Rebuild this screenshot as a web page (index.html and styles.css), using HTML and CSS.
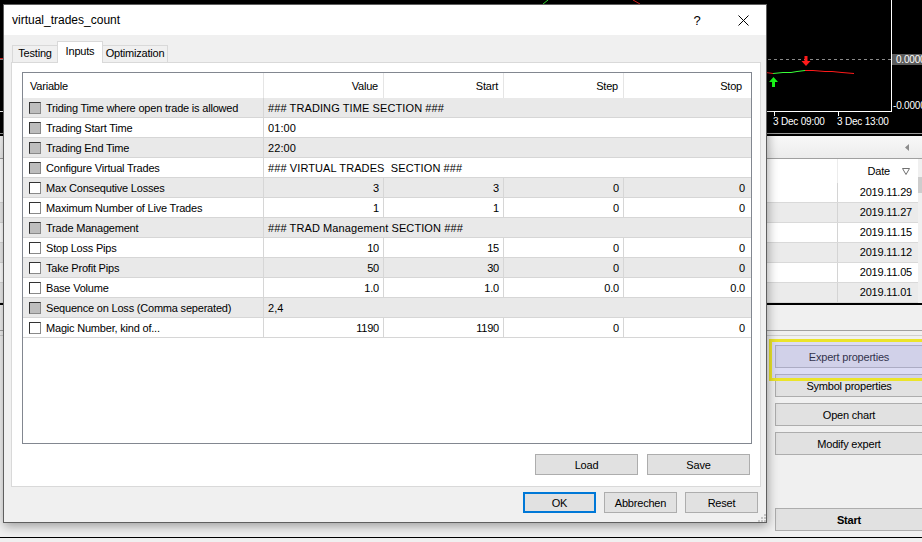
FILE: index.html
```html
<!DOCTYPE html>
<html lang="en">
<head>
    <meta charset="UTF-8">
    <title>virtual_trades_count</title>
    <link rel="stylesheet" href="styles.css">
</head>
<body>
    <!-- Terminal behind the dialog -->
    <div class="terminal">
        <div class="chart">
            <svg class="chart-canvas" width="922" height="133" viewBox="0 0 922 133">
                <line x1="543" y1="4" x2="548" y2="0" stroke="#2fe02f"/>
                <line x1="633" y1="0" x2="640" y2="4" stroke="#e02020"/>
                <line x1="0" y1="58.5" x2="3" y2="58.5" stroke="#e02020"/>
                <line x1="0" y1="59.5" x2="891" y2="59.5" stroke="#8a8a8a" stroke-dasharray="3 3"/>
                <line x1="891.5" y1="0" x2="891.5" y2="112" stroke="#fff"/>
                <line x1="0" y1="111.5" x2="891" y2="111.5" stroke="#fff"/>
                <line x1="774.5" y1="111" x2="774.5" y2="116" stroke="#fff"/>
                <line x1="838.5" y1="111" x2="838.5" y2="116" stroke="#fff"/>
                <polyline points="766,72.5 773,73.5" fill="none" stroke="#ff1a1a"/>
                <polyline points="773,73.5 783,72.5 791,72.5 797,71.5 805,70.5" fill="none" stroke="#39ff39"/>
                <polyline points="805,70.5 813,70.5 825,71.5 832,71.5 842,72.5 854,73.5" fill="none" stroke="#ff1a1a"/>
                <path d="M804.5 56h3v5h3l-4.5 5-4.5-5h3z" fill="#ff1a1a"/>
                <path d="M772 87v-5h-3l4.5-5 4.5 5h-3v5z" fill="#1aff1a"/>
                <rect x="892" y="54" width="30" height="11" fill="#5c5c5c"/>
                <text class="axis-label" x="896" y="63">0.0000</text>
                <text class="axis-label" x="893" y="109">-0.0000</text>
                <text class="axis-label" x="773" y="125">3 Dec 09:00</text>
                <text class="axis-label" x="837" y="125">3 Dec 13:00</text>
            </svg>
        </div>

        <div class="toolbar">
            <svg width="4" height="7" viewBox="0 0 4 7"><polygon points="4,0 4,7 0,3.5" fill="#8c8c8c"/></svg>
        </div>

        <div class="results">
            <div class="results-list">
                <div class="results-head">
                    <div class="cell"></div>
                    <div class="cell date">
                        <span>Date</span>
                        <svg width="8" height="7" viewBox="0 0 8 7"><polygon points="0.5,0.5 7.5,0.5 4,6.5" fill="none" stroke="#707070"/></svg>
                    </div>
                </div>
                <div class="results-row"><div class="cell"></div><div class="cell date">2019.11.29</div></div>
                <div class="results-row"><div class="cell"></div><div class="cell date">2019.11.27</div></div>
                <div class="results-row"><div class="cell"></div><div class="cell date">2019.11.15</div></div>
                <div class="results-row"><div class="cell"></div><div class="cell date">2019.11.12</div></div>
                <div class="results-row"><div class="cell"></div><div class="cell date">2019.11.05</div></div>
                <div class="results-row"><div class="cell"></div><div class="cell date">2019.11.01</div></div>
            </div>
            <div class="vscroll"><div class="thumb"></div></div>
        </div>

        <div class="strip"></div>

        <div class="side-panel">
            <div class="side-buttons">
                <button class="btn side">Expert properties</button>
                <button class="btn side">Symbol properties</button>
                <button class="btn side">Open chart</button>
                <button class="btn side">Modify expert</button>
                <button class="btn side start">Start</button>
            </div>
        </div>

        <div class="highlight"></div>
    </div>

    <!-- Expert properties dialog -->
    <div class="dialog">
        <div class="title-bar">
            <span class="title">virtual_trades_count</span>
            <span class="caption-btn help">?</span>
            <span class="caption-btn">
                <svg width="11" height="11" viewBox="0 0 11 11"><path d="M0.5 0.5l10 10M10.5 0.5l-10 10" stroke="#000" stroke-width="1"/></svg>
            </span>
        </div>

        <div class="dialog-body">
            <div class="tabs">
                <div class="tab">Testing</div>
                <div class="tab active">Inputs</div>
                <div class="tab">Optimization</div>
            </div>

            <div class="tab-page">
                <div class="list-view">
                    <table class="inputs">
                        <colgroup>
                            <col class="col-var">
                            <col class="col-num">
                            <col class="col-num">
                            <col class="col-num">
                            <col class="col-last">
                        </colgroup>
                        <thead>
                            <tr>
                                <th class="var">Variable</th>
                                <th>Value</th>
                                <th>Start</th>
                                <th>Step</th>
                                <th class="last">Stop</th>
                            </tr>
                        </thead>
                        <tbody>
                            <tr>
                                <td class="var"><span class="check off"></span>Triding Time where open trade is allowed</td>
                                <td class="text" colspan="4">### TRADING TIME SECTION ###</td>
                            </tr>
                            <tr>
                                <td class="var"><span class="check off"></span>Trading Start Time</td>
                                <td class="text" colspan="4">01:00</td>
                            </tr>
                            <tr>
                                <td class="var"><span class="check off"></span>Trading End Time</td>
                                <td class="text" colspan="4">22:00</td>
                            </tr>
                            <tr>
                                <td class="var"><span class="check off"></span>Configure Virtual Trades</td>
                                <td class="text" colspan="4">### VIRTUAL TRADES&nbsp; SECTION ###</td>
                            </tr>
                            <tr>
                                <td class="var"><span class="check"></span>Max Consequtive Losses</td>
                                <td>3</td><td>3</td><td>0</td><td class="last">0</td>
                            </tr>
                            <tr>
                                <td class="var"><span class="check"></span>Maximum Number of Live Trades</td>
                                <td>1</td><td>1</td><td>0</td><td class="last">0</td>
                            </tr>
                            <tr>
                                <td class="var"><span class="check off"></span>Trade Management</td>
                                <td class="text" colspan="4">### TRAD Management SECTION ###</td>
                            </tr>
                            <tr>
                                <td class="var"><span class="check"></span>Stop Loss Pips</td>
                                <td>10</td><td>15</td><td>0</td><td class="last">0</td>
                            </tr>
                            <tr>
                                <td class="var"><span class="check"></span>Take Profit Pips</td>
                                <td>50</td><td>30</td><td>0</td><td class="last">0</td>
                            </tr>
                            <tr>
                                <td class="var"><span class="check"></span>Base Volume</td>
                                <td>1.0</td><td>1.0</td><td>0.0</td><td class="last">0.0</td>
                            </tr>
                            <tr>
                                <td class="var"><span class="check off"></span>Sequence on Loss (Comma seperated)</td>
                                <td class="text" colspan="4">2,4</td>
                            </tr>
                            <tr>
                                <td class="var"><span class="check"></span>Magic Number, kind of...</td>
                                <td>1190</td><td>1190</td><td>0</td><td class="last">0</td>
                            </tr>
                        </tbody>
                    </table>
                </div>

                <div class="page-buttons">
                    <button class="btn wide">Load</button>
                    <button class="btn wide">Save</button>
                </div>
            </div>

            <div class="dialog-buttons">
                <button class="btn default">OK</button>
                <button class="btn">Abbrechen</button>
                <button class="btn">Reset</button>
            </div>

            <svg class="grip" width="9" height="9" viewBox="0 0 9 9">
                <rect x="7" y="1" width="2" height="2" fill="#c4c4c4"/>
                <rect x="4" y="4" width="2" height="2" fill="#c4c4c4"/>
                <rect x="7" y="4" width="2" height="2" fill="#c4c4c4"/>
                <rect x="1" y="7" width="2" height="2" fill="#c4c4c4"/>
                <rect x="4" y="7" width="2" height="2" fill="#c4c4c4"/>
                <rect x="7" y="7" width="2" height="2" fill="#c4c4c4"/>
            </svg>
        </div>
    </div>
</body>
</html>
```

FILE: styles.css
```css
/* Base */
body {
    margin: 0;
    width: 922px;
    height: 542px;
    overflow: hidden;
    position: relative;
    font-family: "Liberation Sans", Arial, sans-serif;
    font-size: 11px;
    letter-spacing: -0.2px;
    color: #000;
    background-color: #f0f0f0;
}

button {
    font-family: inherit;
    font-size: 11px;
    letter-spacing: -0.2px;
    color: #000;
}

/* Terminal in the background */
.terminal {
    display: flex;
    flex-direction: column;
    height: 542px;
}

.chart {
    height: 133px;
    background-color: #000;
    border-bottom: 1px solid #9a9a9a;
}

.chart-canvas {
    display: block;
}

.axis-label {
    font-family: "Liberation Sans", Arial, sans-serif;
    font-size: 10px;
    fill: #fff;
}

.toolbar {
    height: 22px;
    border-top: 2px solid #000;
    border-bottom: 1px solid #a0a0a0;
    background: linear-gradient(#f8f8f8, #ececec);
    display: flex;
    justify-content: flex-end;
    align-items: center;
    padding-right: 13px;
}

.results {
    display: flex;
    height: 144px;
    border-bottom: 2px solid #000;
    background-color: #fff;
}

.results-list {
    flex: 1;
}

.results-head, .results-row {
    display: grid;
    grid-template-columns: 1fr 81px;
}

.results-head {
    height: 24px;
}

.results-row {
    height: 19px;
    border-bottom: 1px solid #d9d9d9;
}

.results-row:nth-child(odd) {
    background-color: #ebebeb;
}

.results-row .cell.date {
    border-left: 1px solid #d4d4d4;
    text-align: right;
    padding-right: 6px;
    line-height: 19px;
}

.results-head .cell.date {
    border-left: 1px solid #ececec;
    display: flex;
    justify-content: flex-end;
    align-items: center;
    gap: 12px;
    padding-right: 8px;
}

.vscroll {
    width: 4px;
    background-color: #f0f0f0;
}

.vscroll .thumb {
    margin-top: 18px;
    height: 16px;
    background-color: #cdcdcd;
}

.strip {
    height: 25px;
    border-bottom: 1px solid #a0a0a0;
}

.side-panel {
    flex: 1;
    margin-top: 4px;
    border-top: 1px solid #cfcfcf;
    border-bottom: 1px solid #000;
    margin-bottom: 4px;
    display: flex;
    justify-content: flex-end;
}

.side-buttons {
    width: 148px;
    margin-right: -1px;
    padding: 9px 0 6px;
    display: flex;
    flex-direction: column;
    gap: 6px;
}

.btn {
    background-color: #e1e1e1;
    border: 1px solid #adadad;
    padding: 0;
    height: 21px;
    width: 73px;
}

.btn.side {
    width: 148px;
    height: 23px;
}

.btn.start {
    margin-top: auto;
    font-weight: bold;
}

/* Yellow marker drawn over the terminal */
.highlight {
    position: absolute;
    left: 769px;
    top: 339px;
    width: 170px;
    height: 36px;
    border: 3px solid #ebe42a;
    background-color: rgba(170, 170, 255, 0.28);
}

/* Dialog window */
.dialog {
    position: absolute;
    left: 3px;
    top: 4px;
    width: 764px;
    height: 519px;
    box-sizing: border-box;
    border: 1px solid #5f5f5f;
    background-color: #f0f0f0;
    box-shadow: 1px 3px 10px rgba(0, 0, 0, 0.35);
    display: flex;
    flex-direction: column;
}

.title-bar {
    height: 30px;
    background-color: #fff;
    display: flex;
    align-items: center;
    flex-shrink: 0;
}

.title {
    flex: 1;
    padding-left: 8px;
    font-size: 12px;
    letter-spacing: 0;
}

.caption-btn {
    width: 46px;
    height: 30px;
    display: flex;
    align-items: center;
    justify-content: center;
}

.caption-btn.help {
    font-size: 13px;
    letter-spacing: 0;
}

.dialog-body {
    flex: 1;
    position: relative;
    padding: 6px 5px 0 7px;
}

.tabs {
    display: flex;
    align-items: flex-end;
    height: 22px;
    padding-left: 1px;
}

.tab {
    box-sizing: border-box;
    height: 17px;
    margin-bottom: 1px;
    margin-right: -1px;
    border: 1px solid #d9d9d9;
    border-bottom: none;
    text-align: center;
    line-height: 15px;
}

.tab:nth-child(1) {
    width: 46px;
}

.tab:nth-child(2) {
    width: 46px;
}

.tab:nth-child(3) {
    width: 66px;
}

.tab.active {
    position: relative;
    z-index: 1;
    height: 22px;
    margin-bottom: 0;
    background-color: #fff;
    line-height: 18px;
}

.tab-page {
    box-sizing: border-box;
    height: 425px;
    margin-top: -1px;
    border: 1px solid #d9d9d9;
    background-color: #fff;
    padding: 9px 10px 0 10px;
}

.list-view {
    box-sizing: border-box;
    width: 730px;
    height: 372px;
    border: 1px solid #828790;
    background-color: #fff;
    overflow: hidden;
}

.inputs {
    width: 728px;
    table-layout: fixed;
    border-collapse: separate;
    border-spacing: 0;
}

.col-var {
    width: 241px;
}

.col-num {
    width: 120px;
}

.col-last {
    width: 127px;
}

.inputs th, .inputs td {
    box-sizing: border-box;
    padding: 0 4px 0 0;
    white-space: nowrap;
    overflow: hidden;
    text-align: right;
}

.inputs th {
    height: 25px;
    font-weight: normal;
    padding-right: 5px;
    border-right: 1px solid #e5e5e5;
}

.inputs th.var {
    text-align: left;
    padding-left: 7px;
}

.inputs th.last {
    border-right: none;
    padding-right: 9px;
}

.inputs td {
    height: 20px;
    border-bottom: 1px solid #d6d6d6;
    border-right: 1px solid #d6d6d6;
}

.inputs td.var {
    text-align: left;
    padding-left: 6px;
}

.inputs td.text {
    text-align: left;
    padding-left: 4px;
    border-right: none;
    letter-spacing: 0.1px;
}

.inputs td.last {
    border-right: none;
    padding-right: 6px;
}

.inputs tbody tr:nth-child(odd) td {
    background-color: #e9e9e9;
}

.check {
    display: inline-block;
    box-sizing: border-box;
    width: 12px;
    height: 12px;
    margin-right: 5px;
    vertical-align: -2px;
    border: 1px solid #333;
    border-right-color: #8a8a8a;
    border-bottom-color: #8a8a8a;
    background-color: #fff;
}

.check.off {
    background-color: #bdbdbd;
}

.page-buttons {
    display: flex;
    justify-content: flex-end;
    gap: 9px;
    margin-top: 10px;
}

.btn.wide {
    width: 103px;
}

.dialog-buttons {
    display: flex;
    justify-content: flex-end;
    gap: 8px;
    margin-top: 5px;
    margin-right: 3px;
}

.btn.default {
    border: 2px solid #0078d7;
}

.grip {
    position: absolute;
    right: 0;
    bottom: 0;
}
```
